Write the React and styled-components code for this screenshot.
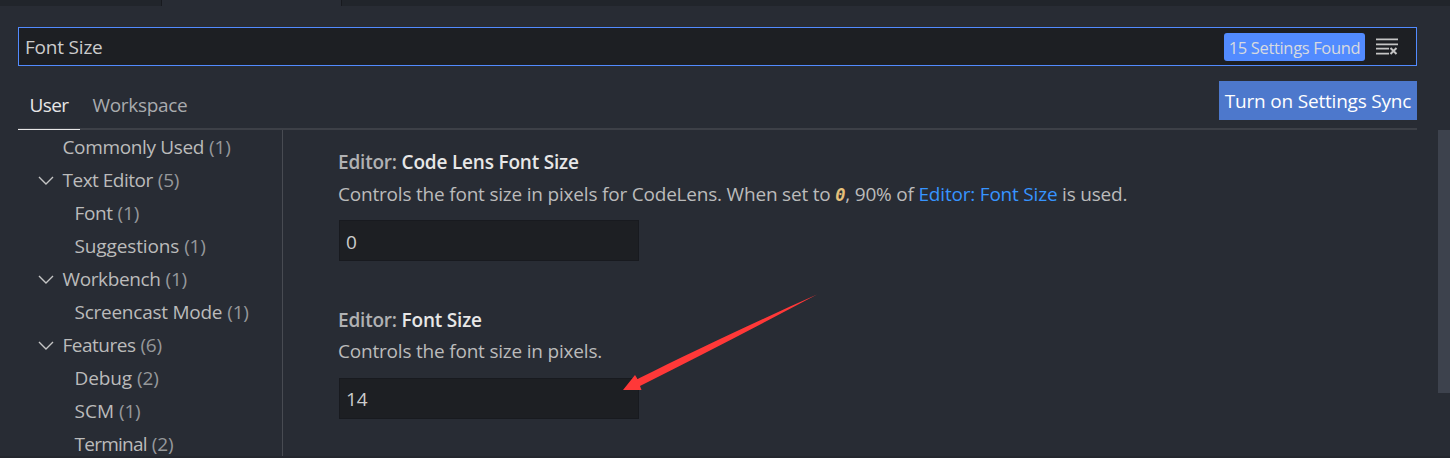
import React from "react";
import styled, { createGlobalStyle } from "styled-components";

const GlobalStyle = createGlobalStyle`
  * { box-sizing: border-box; }
  body { margin: 0; background: #282c34; overflow: hidden; }
`;

const Window = styled.div`
  position: relative;
  display: flex;
  flex-direction: column;
  width: 1450px;
  height: 458px;
  overflow: hidden;
  background: #282c34;
  border-bottom: 2px solid #24272e;
  color: #bbbbbb;
  font-family: "Open Sans", "Noto Sans", sans-serif;
  font-size: 19px;
  letter-spacing: -0.2px;
  white-space: nowrap;
`;

const TabStrip = styled.div`
  display: flex;
  flex: none;
  height: 6px;
  background: #21252b;
`;

const EditorTab = styled.div`
  width: ${(p) => p.$width}px;
  border-right: 1px solid #181a1f;
  background: ${(p) => (p.$active ? "#282c34" : "#21252b")};
`;

const Header = styled.header`
  flex: none;
  padding: 21px 33px 0 18px;
`;

const SearchBox = styled.div`
  display: flex;
  align-items: center;
  height: 39px;
  padding: 0 17px 0 6px;
  border: 1px solid #528bff;
  background: #1d1f23;
  color: #cccccc;
`;

const Query = styled.span`
  flex: 1;
  letter-spacing: -0.2px;
`;

const CountBadge = styled.span`
  width: 141px;
  height: 28px;
  margin-right: 10px;
  border-radius: 3px;
  background: #528bff;
  color: #d7dae0;
  font-size: 16.5px;
  letter-spacing: -0.35px;
  line-height: 29px;
  text-align: center;
`;

const TargetBar = styled.div`
  display: flex;
  align-items: flex-end;
  height: 64px;
  border-bottom: 2px solid #3d4047;
`;

const Target = styled.div`
  height: 50px;
  margin-bottom: -2px;
  padding: 0 12px 0 ${(p) => (p.$active ? 11.5 : 12)}px;
  border-bottom: 1px solid ${(p) => (p.$active ? "#e7e7e7" : "transparent")};
  color: ${(p) => (p.$active ? "#e7e7e7" : "#a9abae")};
  letter-spacing: ${(p) => (p.$active ? -0.6 : -0.32)}px;
  line-height: 50px;
`;

const SyncButton = styled.button`
  align-self: flex-start;
  width: 198px;
  height: 39px;
  margin: 15px 0 0 auto;
  padding: 0;
  border: 0;
  background: #4d78cc;
  color: #ffffff;
  font: inherit;
  letter-spacing: -0.2px;
  line-height: 41px;
`;

const Body = styled.div`
  display: flex;
  flex: 1;
  min-height: 0;
`;

const Tree = styled.nav`
  flex: none;
  width: 283px;
  border-right: 1px solid #484b52;
`;

const TreeRow = styled.div`
  display: flex;
  align-items: center;
  height: 33px;
  padding-left: ${(p) => (p.$child ? 74.5 : 37)}px;
`;

const Twistie = styled.span`
  display: flex;
  width: 25.5px;
`;

const Label = styled.span`
  letter-spacing: ${(p) => p.$tracking}px;
`;

const Count = styled.span`
  margin-left: 5px;
  color: #96989b;
`;

const Settings = styled.main`
  flex: 1;
  padding: 17px 0 0 55px;
`;

const Setting = styled.section`
  height: ${(p) => p.$height}px;
`;

const Title = styled.h3`
  height: 30px;
  margin: 0;
  color: #e7e7e7;
  font-size: 19px;
  font-weight: 600;
  line-height: 30px;
  letter-spacing: -0.2px;
`;

const Category = styled.span`
  color: #b0b1b3;
`;

const Description = styled.p`
  height: ${(p) => p.$height}px;
  margin: 0;
  line-height: ${(p) => p.$height}px;
`;

const Code = styled.code`
  color: #e5c07b;
  font-family: "DejaVu Sans Mono", monospace;
  font-size: 17px;
  font-style: italic;
  font-weight: 700;
`;

const Link = styled.a`
  color: #3794ff;
`;

const NumberField = styled.div`
  width: 300px;
  height: 41px;
  margin: ${(p) => p.$gap}px 0 0 1px;
  padding-left: 6px;
  border: 1px solid #181a1f;
  background: #1d1f23;
  color: #cccccc;
  line-height: ${(p) => p.$line}px;
`;

const Scrollbar = styled.div`
  flex: none;
  width: 12px;
  height: 263px;
  background: #3d424d;
`;

const Pointer = styled.svg`
  position: absolute;
  left: 620px;
  top: 292px;
`;

const tree = [
  { label: "Commonly Used", count: 1, leaf: true, tracking: -0.35 },
  { label: "Text Editor", count: 5, tracking: -0.5 },
  { label: "Font", count: 1, child: true, tracking: -0.4 },
  { label: "Suggestions", count: 1, child: true, tracking: -0.13 },
  { label: "Workbench", count: 1, tracking: -0.38 },
  { label: "Screencast Mode", count: 1, child: true, tracking: -0.25 },
  { label: "Features", count: 6, tracking: -0.5 },
  { label: "Debug", count: 2, child: true, tracking: -0.1 },
  { label: "SCM", count: 1, child: true, tracking: 0 },
  { label: "Terminal", count: 2, child: true, tracking: -0.75 },
];

function Chevron() {
  return (
    <svg width="18" height="18" viewBox="0 0 18 18" fill="none" stroke="#c5c5c5" strokeWidth="1.4">
      <path d="M2 6l7 7 7-7" />
    </svg>
  );
}

function ClearIcon() {
  return (
    <svg width="24" height="24" viewBox="0 0 24 24" fill="none" stroke="#c5c5c5">
      <path strokeWidth="1.8" d="M1 4.4h22M1 9.4h22M1 13.6h13M1 18.6h13" />
      <path strokeWidth="2" d="M15.5 13l6 6M21.5 13l-6 6" />
    </svg>
  );
}

export default function App() {
  return (
    <>
      <GlobalStyle />
      <Window>
        <TabStrip>
          <EditorTab $width={162} />
          <EditorTab $width={180} $active />
        </TabStrip>
        <Header>
          <SearchBox>
            <Query>Font Size</Query>
            <CountBadge>15 Settings Found</CountBadge>
            <ClearIcon />
          </SearchBox>
          <TargetBar>
            <Target $active>User</Target>
            <Target>Workspace</Target>
            <SyncButton>Turn on Settings Sync</SyncButton>
          </TargetBar>
        </Header>
        <Body>
          <Tree>
            {tree.map((item) => (
              <TreeRow key={item.label} $child={item.child}>
                {!item.child && <Twistie>{!item.leaf && <Chevron />}</Twistie>}
                <Label $tracking={item.tracking}>{item.label}</Label>
                <Count>({item.count})</Count>
              </TreeRow>
            ))}
          </Tree>
          <Settings>
            <Setting $height={158}>
              <Title>
                <Category>Editor:</Category> Code Lens Font Size
              </Title>
              <Description $height={35}>
                Controls the font size in pixels for CodeLens. When set to <Code>0</Code>, 90% of{" "}
                <Link>Editor: Font Size</Link> is used.
              </Description>
              <NumberField $gap={8} $line={42}>0</NumberField>
            </Setting>
            <Setting $height={140}>
              <Title>
                <Category>Editor:</Category> Font Size
              </Title>
              <Description $height={33}>Controls the font size in pixels.</Description>
              <NumberField $gap={10} $line={40}>14</NumberField>
            </Setting>
          </Settings>
          <Scrollbar />
        </Body>
        <Pointer width="200" height="102" viewBox="620 292 200 102">
          <path
            fill="#ff3838"
            d="M623 390L635 375L637.5 379C690 353 755 322 817 294.5C758 326 698 357 640 386L641.5 390Z"
          />
        </Pointer>
      </Window>
    </>
  );
}
